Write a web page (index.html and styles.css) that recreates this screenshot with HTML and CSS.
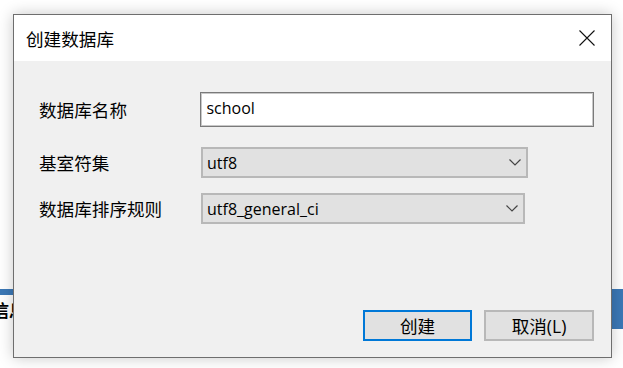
FILE: index.html
```html
<!DOCTYPE html>
<html lang="zh-CN">
<head>
    <meta charset="UTF-8">
    <title>创建数据库</title>
    <link rel="stylesheet" href="styles.css">
</head>
<body>

    <!-- the main window behind the dialog -->
    <div class="backdrop">
        <div class="side-left">
            <div class="tab-bar"></div>
            <div class="side-text">信息</div>
        </div>
        <div class="side-right"></div>
    </div>

    <div class="dialog">
        <div class="title-bar">
            <span class="title">创建数据库</span>
            <svg class="close" width="16" height="16" viewBox="0 0 16 16">
                <path d="M0.5 0.5 L15.5 15.5 M15.5 0.5 L0.5 15.5" stroke="#111" stroke-width="1.1" fill="none"/>
            </svg>
        </div>

        <div class="dialog-body">
            <div class="form">
                <div class="row row-name">
                    <label class="label">数据库名称</label>
                    <div class="input">school</div>
                </div>
                <div class="row row-charset">
                    <label class="label">基室符集</label>
                    <div class="select select-charset">
                        <span>utf8</span>
                        <svg class="chevron" width="12" height="7" viewBox="0 0 12 7">
                            <path d="M0.5 0.5 L6 6 L11.5 0.5" stroke="#444" stroke-width="1.2" fill="none"/>
                        </svg>
                    </div>
                </div>
                <div class="row row-collation">
                    <label class="label">数据库排序规则</label>
                    <div class="select select-collation">
                        <span>utf8_general_ci</span>
                        <svg class="chevron" width="12" height="7" viewBox="0 0 12 7">
                            <path d="M0.5 0.5 L6 6 L11.5 0.5" stroke="#444" stroke-width="1.2" fill="none"/>
                        </svg>
                    </div>
                </div>
            </div>

            <div class="buttons">
                <button class="btn btn-default">创建</button>
                <button class="btn">取消(L)</button>
            </div>
        </div>
    </div>

</body>
</html>
```

FILE: styles.css
```css
body {
    margin: 0;
    width: 623px;
    height: 368px;
    overflow: hidden;
    position: relative;
    background-color: #fff;
    font-family: "Noto Sans CJK SC", "Noto Sans", sans-serif;
    color: #000;
}
.backdrop {
    display: flex;
    justify-content: space-between;
    padding-top: 289px;
}
.side-left {
    width: 40px;
}
.tab-bar {
    height: 6px;
    background-color: #3b78b6;
}
.side-text {
    margin-top: 4px;
    margin-left: -8px;
    font-size: 17px;
    font-weight: bold;
    line-height: 22px;
}
.side-right {
    width: 11px;
    height: 40px;
    background-color: #3b78b6;
}
.dialog {
    position: absolute;
    left: 13px;
    top: 14px;
    width: 597px;
    height: 342px;
    border: 1px solid #6e6e6e;
    background-color: #f0f0f0;
    box-shadow: 0 0 14px rgba(0, 0, 0, 0.22);
    display: flex;
    flex-direction: column;
}
.title-bar {
    height: 46px;
    background-color: #fff;
    display: flex;
    align-items: center;
    justify-content: space-between;
    padding: 0 16px 0 12px;
}
.title {
    font-size: 17.6px;
}
.close {
    display: block;
}
.dialog-body {
    flex: 1;
    display: flex;
    flex-direction: column;
    justify-content: space-between;
    padding: 31px 17px 16px 25px;
}
.row {
    display: flex;
    align-items: center;
}
.row-charset {
    margin-top: 20px;
}
.row-collation {
    margin-top: 15px;
}
.label {
    width: 162px;
    font-size: 17.6px;
}
.input {
    box-sizing: border-box;
    width: 395px;
    height: 35px;
    background-color: #fff;
    border: 1px solid #7a7a7a;
    box-shadow: inset 0 0 0 1px #c8c8c8;
    padding: 0 5px;
    font-family: "Open Sans", "Noto Sans CJK SC", sans-serif;
    font-size: 16px;
    line-height: 31px;
}
.select {
    box-sizing: border-box;
    height: 31px;
    background-color: #e1e1e1;
    border: 2px solid #b8b8b8;
    padding: 0 5px 0 4px;
    font-family: "Open Sans", "Noto Sans CJK SC", sans-serif;
    font-size: 16px;
    display: flex;
    align-items: center;
    justify-content: space-between;
}
.select-charset {
    width: 327px;
}
.select-collation {
    width: 324px;
}
.buttons {
    display: flex;
    justify-content: flex-end;
    gap: 12px;
}
.btn {
    box-sizing: border-box;
    width: 110px;
    height: 31px;
    background-color: #e1e1e1;
    border: 2px solid #b8b8b8;
    font-family: "Open Sans", "Noto Sans CJK SC", sans-serif;
    font-size: 17.6px;
    color: #000;
    padding: 0;
}
.btn-default {
    width: 109px;
    border-color: #0078d7;
}
```
